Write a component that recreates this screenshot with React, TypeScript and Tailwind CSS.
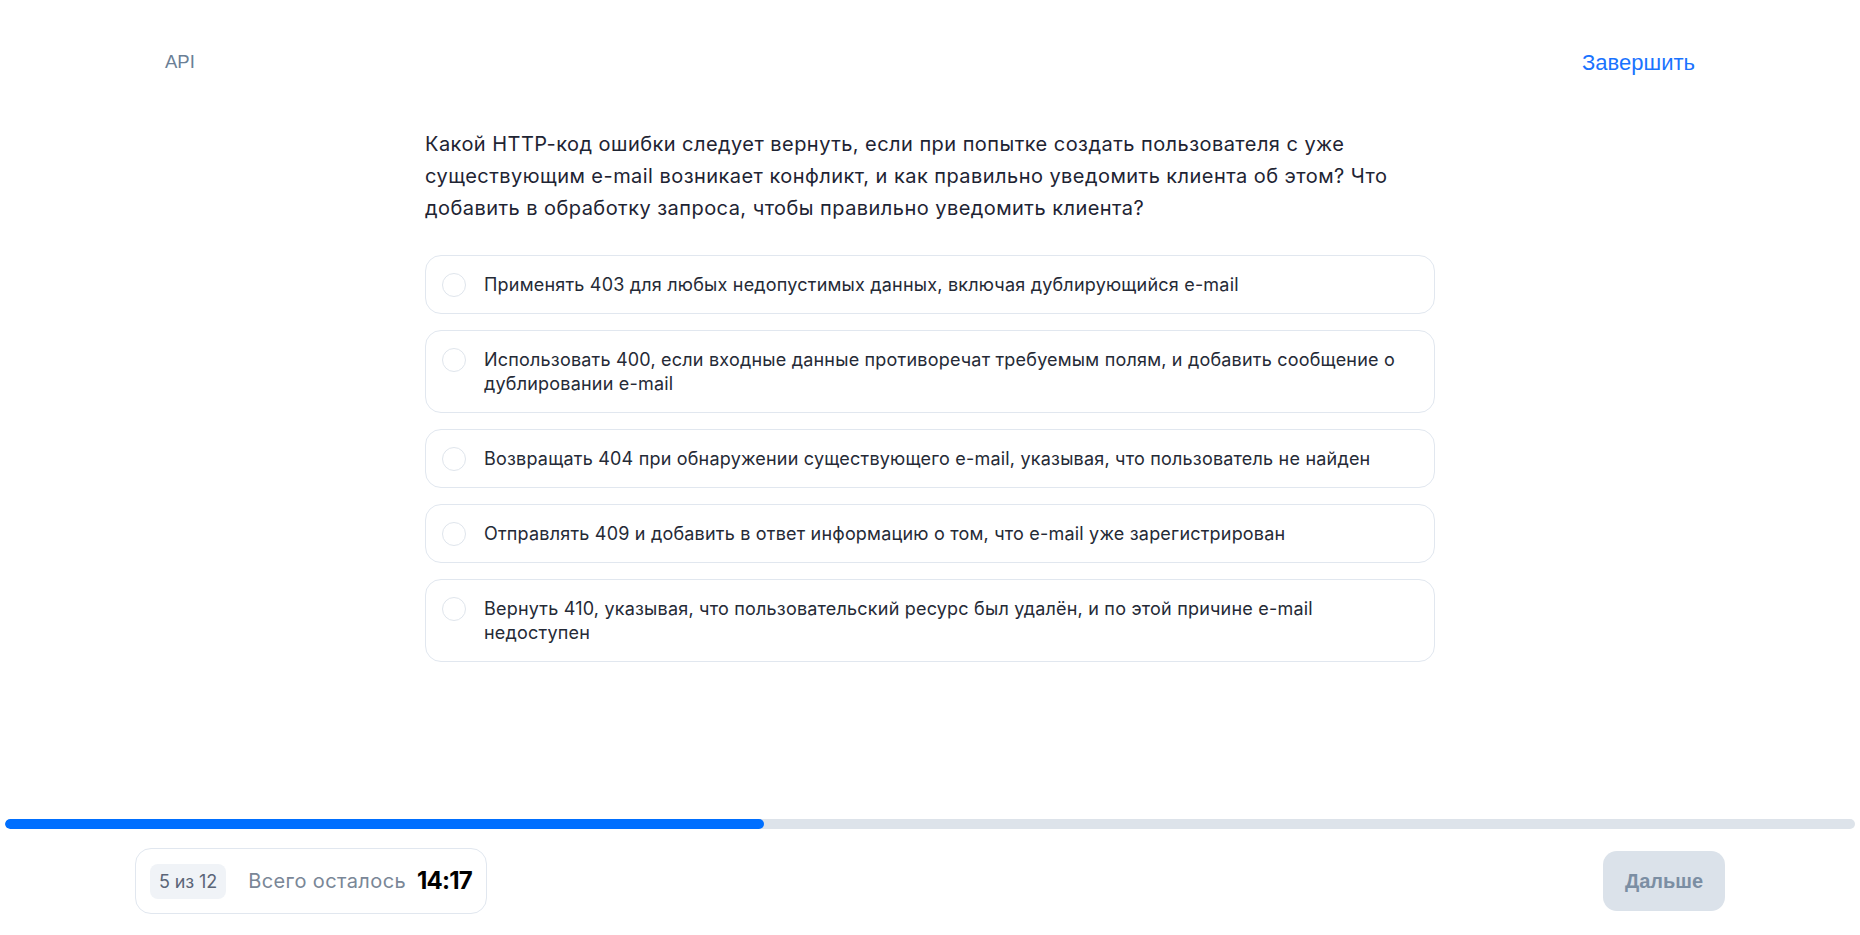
import React from "react";

const options: string[][] = [
  ["Применять 403 для любых недопустимых данных, включая дублирующийся e-mail"],
  [
    "Использовать 400, если входные данные противоречат требуемым полям, и добавить сообщение о",
    "дублировании e-mail",
  ],
  ["Возвращать 404 при обнаружении существующего e-mail, указывая, что пользователь не найден"],
  ["Отправлять 409 и добавить в ответ информацию о том, что e-mail уже зарегистрирован"],
  [
    "Вернуть 410, указывая, что пользовательский ресурс был удалён, и по этой причине e-mail",
    "недоступен",
  ],
];

const question = [
  "Какой HTTP-код ошибки следует вернуть, если при попытке создать пользователя с уже",
  "существующим e-mail возникает конфликт, и как правильно уведомить клиента об этом? Что",
  "добавить в обработку запроса, чтобы правильно уведомить клиента?",
];

export default function App() {
  return (
    <div className="min-h-screen h-[935px] bg-white flex flex-col font-['Inter',sans-serif]">
      <header className="pt-[42px]">
        <div className="w-[1530px] mx-auto h-[40px] flex items-center justify-between font-['Liberation_Sans',Arial,sans-serif]">
          <span className="text-[18.5px] text-[#6b7f96]">API</span>
          <span className="text-[22px] text-[#1a73ff]">Завершить</span>
        </div>
      </header>

      <main className="flex-1">
        <div className="w-[1010px] mx-auto mt-[46px]">
          <div className="text-[20px] leading-[32px] tracking-[0.45px] text-[#1e2433]">
            {question.map((l, i) => (
              <div key={i} className="whitespace-nowrap">
                {l}
              </div>
            ))}
          </div>
          <div className="mt-[31px] flex flex-col gap-4">
            {options.map((lines, i) => (
              <div
                key={i}
                className="flex items-start gap-[18px] border border-[#e1e7ef] rounded-2xl pl-4 pr-4 py-[16.5px]"
              >
                <div className="w-6 h-6 rounded-full border border-[#dfe5ec] bg-white shrink-0" />
                <div className="text-[18px] leading-[24px] tracking-[0.2px] text-[#252a36]">
                  {lines.map((l, j) => (
                    <div key={j} className="whitespace-nowrap">
                      {l}
                    </div>
                  ))}
                </div>
              </div>
            ))}
          </div>
        </div>
      </main>

      <footer className="pb-[21px]">
        <div className="mx-[5px] h-[10px] rounded-full bg-[#dde3ea] overflow-hidden">
          <div className="h-full rounded-full bg-[#006fff] w-[41%]" />
        </div>
        <div className="mt-[19px] w-[1590px] mx-auto h-[66px] flex items-center justify-between">
          <div className="h-[66px] flex items-center border border-[#e1e7ef] rounded-2xl pl-[14px] pr-[14px]">
            <span className="h-[35px] px-[9px] flex items-center rounded-lg bg-[#f0f3f7] text-[18px] text-[#5b6577] tracking-[-0.1px]">
              5 из 12
            </span>
            <span className="ml-[22px] text-[20px] tracking-[0.4px] text-[#7a8797]">Всего осталось</span>
            <span className="ml-[11px] text-[24px] font-bold text-black tracking-[-0.8px]">14:17</span>
          </div>
          <button className="w-[122px] h-[60px] rounded-[14px] bg-[#dbe2ea] text-[#7b8ea3] text-[20px] font-bold font-['Liberation_Sans',Arial,sans-serif]">
            Дальше
          </button>
        </div>
      </footer>
    </div>
  );
}
